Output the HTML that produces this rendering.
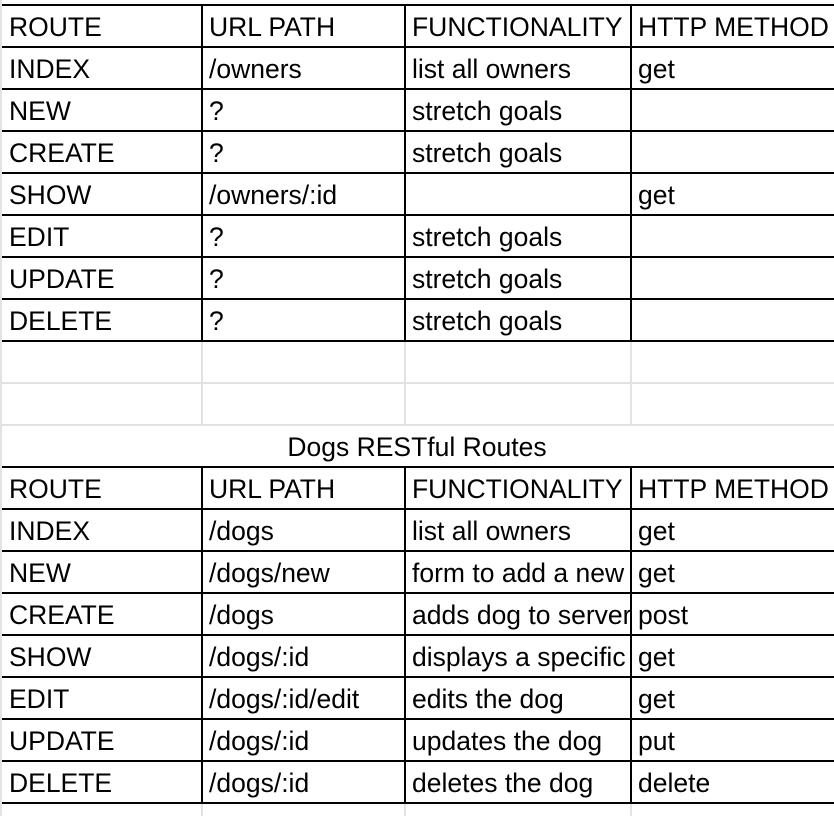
<!DOCTYPE html>
<html><head><meta charset="utf-8"><style>
html,body{margin:0;padding:0;background:#fff;width:834px;height:816px;overflow:hidden;position:relative;font-family:"Liberation Sans",Arial,sans-serif;}
.h{position:absolute;left:2px;width:832px;height:2px;background:#000}
.hg{position:absolute;left:2px;width:832px;height:2px;background:#e2e2e2}
.v{position:absolute;width:2px;background:#000}
.vg{position:absolute;width:2px;background:#e2e2e2}
.t{position:absolute;font-size:26.5px;line-height:42px;height:41px;white-space:nowrap;overflow:hidden;color:#000}
</style></head><body>
<div class="vg" style="left:0;top:0;height:816px"></div>
<div id="g"></div>
<script>
var g=document.getElementById('g'),h='';
var cols=[9,209,412,638],widths=[190,193,218,196];
function row(y,cells){cells.forEach(function(c,i){if(c)h+='<div class="t" style="left:'+cols[i]+'px;top:'+y+'px;width:'+widths[i]+'px">'+c+'</div>';});}
var top1=[["ROUTE","URL PATH","FUNCTIONALITY","HTTP METHOD"],["INDEX","/owners","list all owners","get"],["NEW","?","stretch goals",""],["CREATE","?","stretch goals",""],["SHOW","/owners/:id","","get"],["EDIT","?","stretch goals",""],["UPDATE","?","stretch goals",""],["DELETE","?","stretch goals",""]];
var top2=[["ROUTE","URL PATH","FUNCTIONALITY","HTTP METHOD"],["INDEX","/dogs","list all owners","get"],["NEW","/dogs/new","form to add a new","get"],["CREATE","/dogs","adds dog to server","post"],["SHOW","/dogs/:id","displays a specific","get"],["EDIT","/dogs/:id/edit","edits the dog","get"],["UPDATE","/dogs/:id","updates the dog","put"],["DELETE","/dogs/:id","deletes the dog","delete"]];
top1.forEach(function(r,i){row(6+i*42,r);});
top2.forEach(function(r,i){row(468+i*42,r);});
[383,425].forEach(function(y){h+='<div class="hg" style="top:'+(y-1)+'px"></div>';});
[202,405,631].forEach(function(x){h+='<div class="vg" style="left:'+(x-1)+'px;top:341px;height:84px"></div>';h+='<div class="vg" style="left:'+(x-1)+'px;top:803px;height:13px"></div>';});
for(var i=0;i<=8;i++){h+='<div class="h" style="top:'+(4+i*42)+'px"></div>';h+='<div class="h" style="top:'+(466+i*42)+'px"></div>';}
[202,405,631].forEach(function(x){h+='<div class="v" style="left:'+(x-1)+'px;top:4px;height:338px"></div>';h+='<div class="v" style="left:'+(x-1)+'px;top:466px;height:338px"></div>';});
h+='<div class="t" style="left:0;width:834px;text-align:center;top:426px">Dogs RESTful Routes</div>';
g.innerHTML=h;
</script>
</body></html>
